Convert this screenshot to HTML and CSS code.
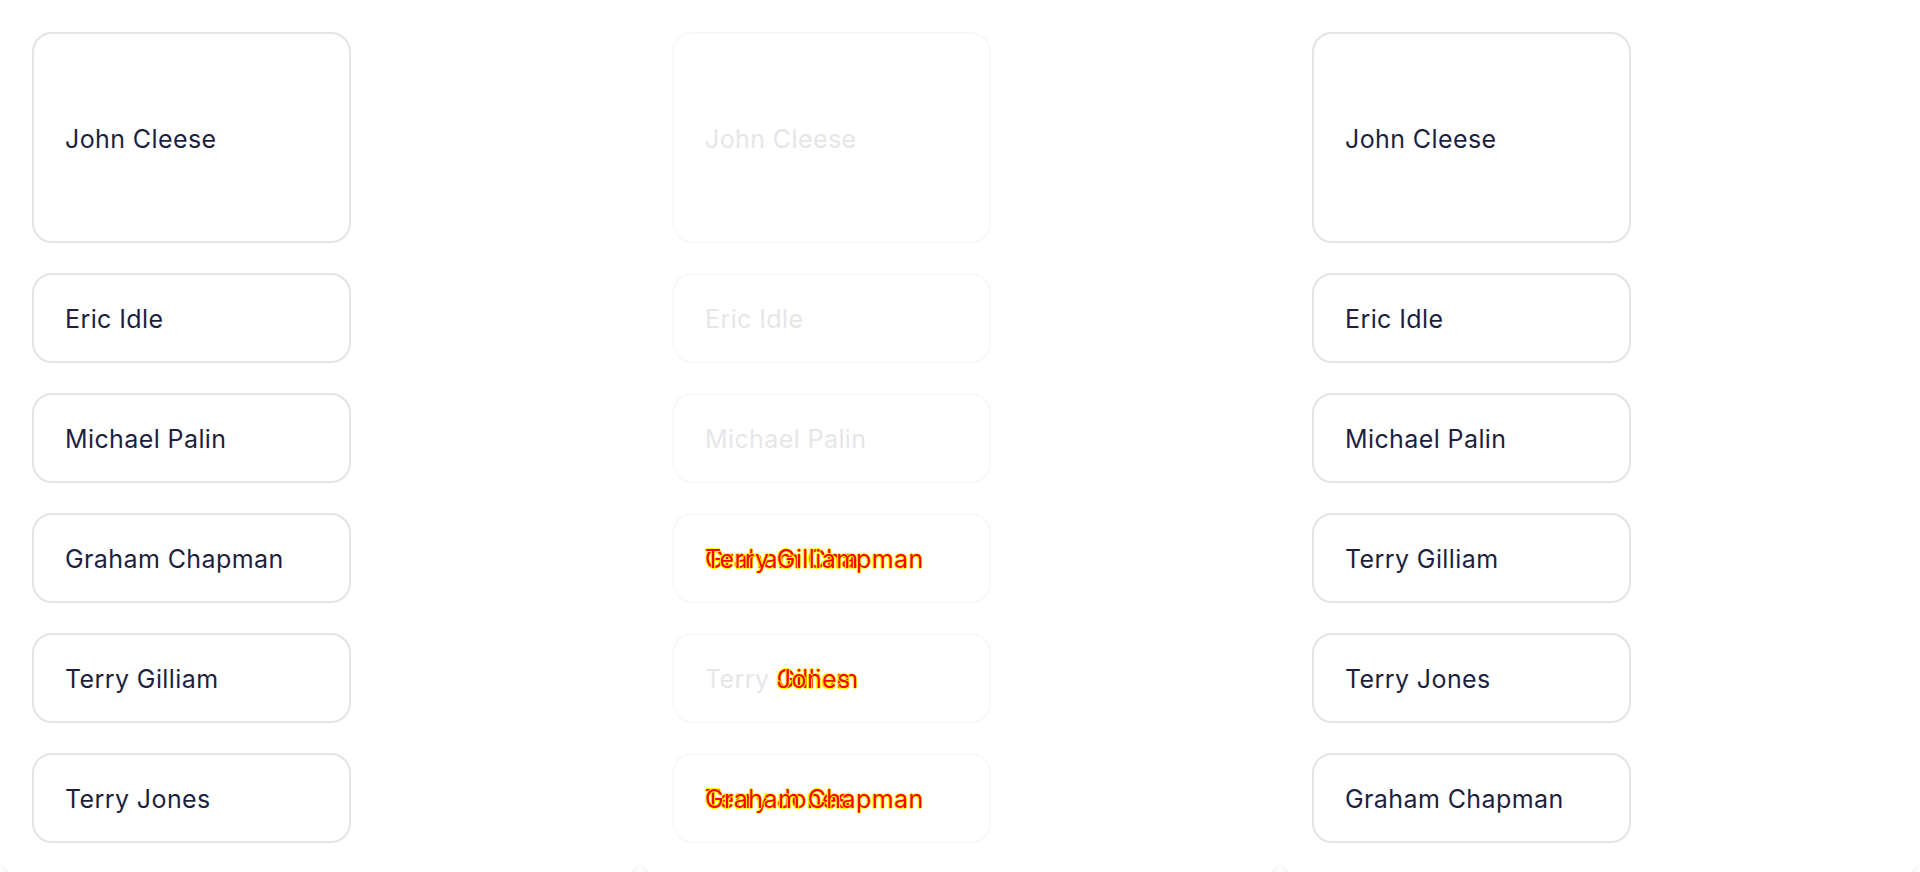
FILE: index.html
```html
<!DOCTYPE html>
<html lang="en">
<head>
<meta charset="utf-8">
<title>Sortable list</title>
<link rel="stylesheet" href="styles.css">
</head>
<body>
<main class="board">
  <section class="panel">
    <ul class="list">
      <li class="card tall">John Cleese</li>
      <li class="card">Eric Idle</li>
      <li class="card">Michael Palin</li>
      <li class="card">Graham Chapman</li>
      <li class="card">Terry Gilliam</li>
      <li class="card">Terry Jones</li>
    </ul>
  </section>
  <section class="panel">
    <ul class="list faded">
      <li class="card tall">John Cleese</li>
      <li class="card">Eric Idle</li>
      <li class="card">Michael Palin</li>
      <li class="card"><span class="stack"><span class="diff">Graham Chapman</span><span class="diff">Terry Gilliam</span></span></li>
      <li class="card"><span>Terry&nbsp;</span><span class="stack"><span class="diff">Gilliam</span><span class="diff">Jones</span></span></li>
      <li class="card"><span class="stack"><span class="diff">Terry Jones</span><span class="diff">Graham Chapman</span></span></li>
    </ul>
  </section>
  <section class="panel">
    <ul class="list">
      <li class="card tall">John Cleese</li>
      <li class="card">Eric Idle</li>
      <li class="card">Michael Palin</li>
      <li class="card">Terry Gilliam</li>
      <li class="card">Terry Jones</li>
      <li class="card">Graham Chapman</li>
    </ul>
  </section>
</main>
</body>
</html>
```

FILE: styles.css
```css
* { box-sizing: border-box; }
html, body { margin: 0; padding: 0; background: #ffffff; }
body {
  font-family: Inter, "Noto Sans", "Liberation Sans", sans-serif;
  width: 1920px;
  height: 872px;
  overflow: hidden;
}
.board {
  display: grid;
  grid-template-columns: repeat(3, 640px);
  height: 870px;
}
.panel {
  background: #ffffff;
  border-radius: 0 0 18px 18px;
  box-shadow: 0 3px 3px -2px rgba(0, 0, 0, 0.14);
  padding: 32px 32px;
}
.list {
  list-style: none;
  margin: 0;
  padding: 0;
  display: flex;
  flex-direction: column;
  gap: 30px;
}
.card {
  width: 319px;
  height: 90px;
  border: 2px solid #e4e4e7;
  border-radius: 20px;
  padding: 2px 31px 0;
  display: flex;
  align-items: center;
  font-size: 25px;
  letter-spacing: 0.4px;
  color: #1d1f3f;
  white-space: nowrap;
}
.card.tall { height: 211px; }
.faded .card {
  border-color: #f8f8f9;
  color: #e6e6e9;
}
.stack {
  display: inline-grid;
}
.stack > .diff {
  grid-area: 1 / 1;
}
.diff {
  color: #ff0000;
  text-shadow: 1px 0 0 #ffff00, -1px 0 0 #ffff00, 0 1px 0 #ffff00, 0 -1px 0 #ffff00;
}
```
